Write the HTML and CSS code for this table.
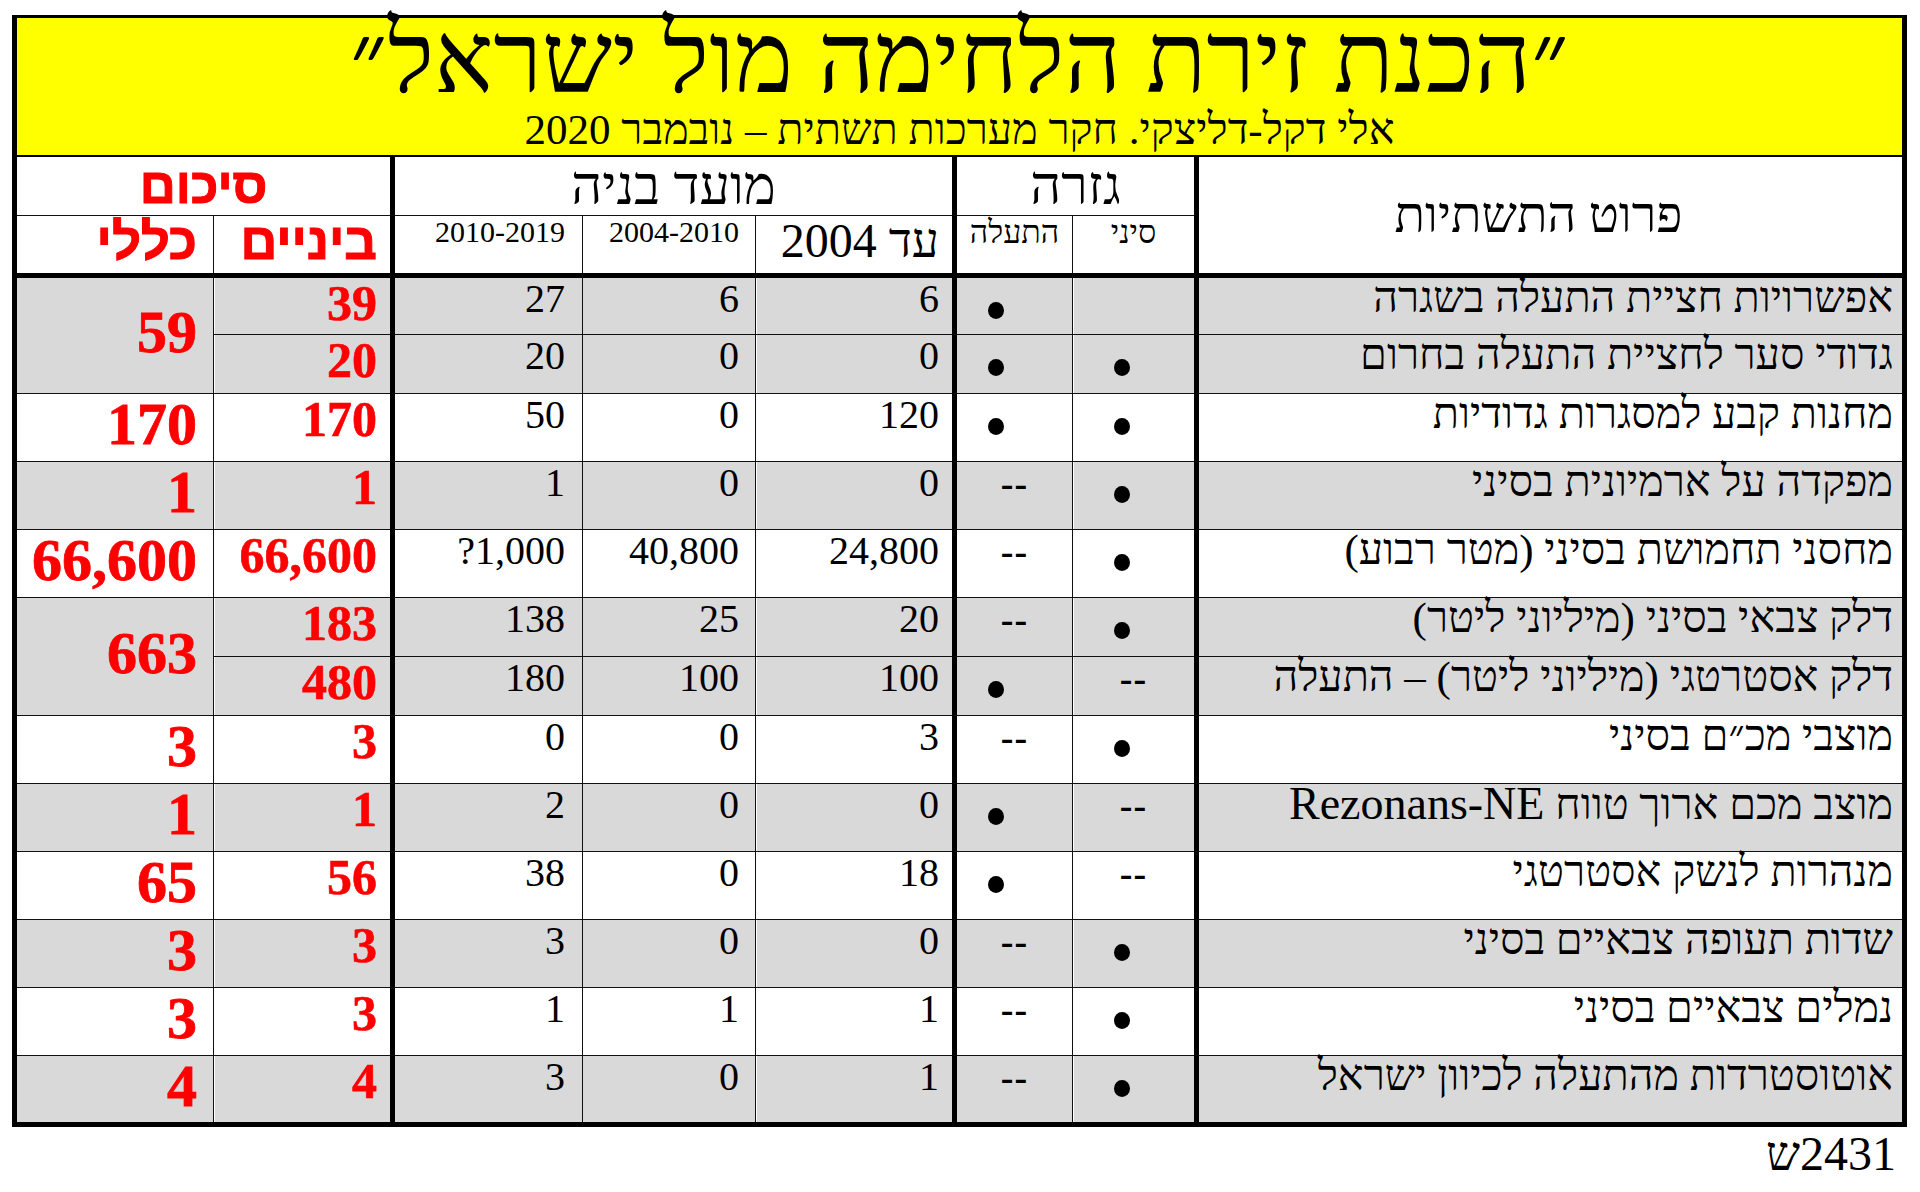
FILE: index.html
```html
<!DOCTYPE html>
<html lang="he" dir="rtl">
<head>
<meta charset="utf-8">
<title>הכנת זירת הלחימה מול ישראל</title>
<link rel="stylesheet" href="styles.css">
</head>
<body>
<div class="sheet">
  <header class="title-box">
    <h1 class="title">״הכנת זירת הלחימה מול ישראל״</h1>
    <p class="subtitle">אלי דקל-דליצקי. חקר מערכות תשתית – נובמבר 2020</p>
  </header>

  <div class="grid">
    <div class="row head1">
      <div class="cell col-d hd-desc">פרוט התשתיות</div>
      <div class="cell col-t hd-grp span2">גזרה</div>
      <div class="cell col-n3 hd-grp span3">מועד בניה</div>
      <div class="cell col-k hd-grp span2 hd-red">סיכום</div>
    </div>
    <div class="row head2">
      <div class="cell col-s sh-small">סיני</div>
      <div class="cell col-t sh-small">התעלה</div>
      <div class="cell col-n1 sh-ad">עד 2004</div>
      <div class="cell col-n2 sh-year">2004-2010</div>
      <div class="cell col-n3 sh-year">2010-2019</div>
      <div class="cell col-b sh-red">ביניים</div>
      <div class="cell col-k sh-red">כללי</div>
    </div>

    <div class="row first gray">
      <div class="cell col-d">אפשרויות חציית התעלה בשגרה</div>
      <div class="cell col-s"></div>
      <div class="cell col-t"><span class="dot"></span></div>
      <div class="cell col-n1">6</div>
      <div class="cell col-n2">6</div>
      <div class="cell col-n3">27</div>
      <div class="cell col-b">39</div>
      <div class="cell col-k merged">59</div>
    </div>
    <div class="row gray">
      <div class="cell col-d">גדודי סער לחציית התעלה בחרום</div>
      <div class="cell col-s"><span class="dot"></span></div>
      <div class="cell col-t"><span class="dot"></span></div>
      <div class="cell col-n1">0</div>
      <div class="cell col-n2">0</div>
      <div class="cell col-n3">20</div>
      <div class="cell col-b">20</div>
    </div>
    <div class="row">
      <div class="cell col-d">מחנות קבע למסגרות גדודיות</div>
      <div class="cell col-s"><span class="dot"></span></div>
      <div class="cell col-t"><span class="dot"></span></div>
      <div class="cell col-n1">120</div>
      <div class="cell col-n2">0</div>
      <div class="cell col-n3">50</div>
      <div class="cell col-b">170</div>
      <div class="cell col-k">170</div>
    </div>
    <div class="row gray">
      <div class="cell col-d">מפקדה על ארמיונית בסיני</div>
      <div class="cell col-s"><span class="dot"></span></div>
      <div class="cell col-t dash">--</div>
      <div class="cell col-n1">0</div>
      <div class="cell col-n2">0</div>
      <div class="cell col-n3">1</div>
      <div class="cell col-b">1</div>
      <div class="cell col-k">1</div>
    </div>
    <div class="row">
      <div class="cell col-d">מחסני תחמושת בסיני (מטר רבוע)</div>
      <div class="cell col-s"><span class="dot"></span></div>
      <div class="cell col-t dash">--</div>
      <div class="cell col-n1">24,800</div>
      <div class="cell col-n2">40,800</div>
      <div class="cell col-n3">1,000?</div>
      <div class="cell col-b">66,600</div>
      <div class="cell col-k">66,600</div>
    </div>
    <div class="row gray">
      <div class="cell col-d">דלק צבאי בסיני (מיליוני ליטר)</div>
      <div class="cell col-s"><span class="dot"></span></div>
      <div class="cell col-t dash">--</div>
      <div class="cell col-n1">20</div>
      <div class="cell col-n2">25</div>
      <div class="cell col-n3">138</div>
      <div class="cell col-b">183</div>
      <div class="cell col-k merged">663</div>
    </div>
    <div class="row gray">
      <div class="cell col-d">דלק אסטרטגי (מיליוני ליטר) – התעלה</div>
      <div class="cell col-s dash">--</div>
      <div class="cell col-t"><span class="dot"></span></div>
      <div class="cell col-n1">100</div>
      <div class="cell col-n2">100</div>
      <div class="cell col-n3">180</div>
      <div class="cell col-b">480</div>
    </div>
    <div class="row">
      <div class="cell col-d">מוצבי מכ״ם בסיני</div>
      <div class="cell col-s"><span class="dot"></span></div>
      <div class="cell col-t dash">--</div>
      <div class="cell col-n1">3</div>
      <div class="cell col-n2">0</div>
      <div class="cell col-n3">0</div>
      <div class="cell col-b">3</div>
      <div class="cell col-k">3</div>
    </div>
    <div class="row gray">
      <div class="cell col-d">מוצב מכם ארוך טווח <span class="latin">Rezonans-NE</span></div>
      <div class="cell col-s dash">--</div>
      <div class="cell col-t"><span class="dot"></span></div>
      <div class="cell col-n1">0</div>
      <div class="cell col-n2">0</div>
      <div class="cell col-n3">2</div>
      <div class="cell col-b">1</div>
      <div class="cell col-k">1</div>
    </div>
    <div class="row">
      <div class="cell col-d">מנהרות לנשק אסטרטגי</div>
      <div class="cell col-s dash">--</div>
      <div class="cell col-t"><span class="dot"></span></div>
      <div class="cell col-n1">18</div>
      <div class="cell col-n2">0</div>
      <div class="cell col-n3">38</div>
      <div class="cell col-b">56</div>
      <div class="cell col-k">65</div>
    </div>
    <div class="row gray">
      <div class="cell col-d">שדות תעופה צבאיים בסיני</div>
      <div class="cell col-s"><span class="dot"></span></div>
      <div class="cell col-t dash">--</div>
      <div class="cell col-n1">0</div>
      <div class="cell col-n2">0</div>
      <div class="cell col-n3">3</div>
      <div class="cell col-b">3</div>
      <div class="cell col-k">3</div>
    </div>
    <div class="row">
      <div class="cell col-d">נמלים צבאיים בסיני</div>
      <div class="cell col-s"><span class="dot"></span></div>
      <div class="cell col-t dash">--</div>
      <div class="cell col-n1">1</div>
      <div class="cell col-n2">1</div>
      <div class="cell col-n3">1</div>
      <div class="cell col-b">3</div>
      <div class="cell col-k">3</div>
    </div>
    <div class="row gray">
      <div class="cell col-d">אוטוסטרדות מהתעלה לכיוון ישראל</div>
      <div class="cell col-s"><span class="dot"></span></div>
      <div class="cell col-t dash">--</div>
      <div class="cell col-n1">1</div>
      <div class="cell col-n2">0</div>
      <div class="cell col-n3">3</div>
      <div class="cell col-b">4</div>
      <div class="cell col-k">4</div>
    </div>
  </div>

  <div class="footer">2431ש</div>
</div>
</body>
</html>
```

FILE: styles.css
```css
html, body {
  margin: 0;
  padding: 0;
  background: #ffffff;
}

body {
  font-family: "Liberation Serif", "DejaVu Sans", serif;
  color: #000000;
}

.sheet {
  width: 1895px;
  margin: 15px 13px 0 12px;
  direction: rtl;
}

/* ---------- title ---------- */
.title-box {
  box-sizing: border-box;
  height: 142px;
  background: #ffff00;
  border-style: solid;
  border-color: #000000;
  border-width: 3px 5px 2px 5px;
  text-align: center;
}

.title {
  margin: -4px 0 0 0;
  font-size: 99px;
  line-height: 90px;
  font-weight: normal;
}

.subtitle {
  margin: 7px 0 0 0;
  font-size: 43px;
  line-height: 38px;
}

/* ---------- grid table ---------- */
.grid {
  display: grid;
  grid-template-columns: 708px 122px 120px 197px 173px 192px 177px 196px;
  grid-template-rows: 58px 58px 61px 59px 68px 68px 68px 59px 59px 68px 68px 68px 68px 68px 67px;
  border-style: solid;
  border-color: #000000;
  border-width: 0 5px 5px 5px;
}

.row {
  display: contents;
}

.cell {
  box-sizing: border-box;
  min-width: 0;
  font-size: 40px;
  line-height: 42px;
  text-align: right;
  white-space: nowrap;
  border-top: 1px solid #111111;
  border-left: 1px solid #111111;
  background: #ffffff;
}

.row.gray > .cell {
  background: #d9d9d9;
}

.row.gray > .col-b,
.row.gray > .col-n1,
.row.gray > .col-s {
  box-shadow: inset 1px 0 0 #ffffff;
}

.row.first > .cell {
  border-top: 5px solid #000000;
}

.head1 > .cell {
  border-top: 0;
}

/* column borders */
.col-d,
.col-t,
.col-n3 {
  border-left: 5px solid #000000;
}

.col-k {
  border-left: 0;
}

/* column paddings */
.col-d {
  padding-right: 9px;
  font-size: 43px;
  line-height: 40px;
}

.latin {
  font-size: 46px;
}

.col-n1 { padding-right: 13px; }
.col-n2 { padding-right: 16px; }
.col-n3 { padding-right: 17px; }

.col-b {
  padding-right: 13px;
  color: #ff0000;
  font-weight: bold;
  font-size: 50px;
  line-height: 50px;
  -webkit-text-stroke: 0.6px #ff0000;
}

.col-k {
  padding-right: 16px;
  color: #ff0000;
  font-weight: bold;
  font-size: 60px;
  line-height: 60px;
  -webkit-text-stroke: 0.8px #ff0000;
}

.col-k.merged {
  grid-row: span 2;
  display: flex;
  align-items: center;
  padding-bottom: 8px;
}

/* indicator columns */
.col-s,
.col-t {
  display: flex;
  justify-content: center;
  align-items: flex-start;
}

.dot {
  display: block;
  width: 16px;
  height: 17px;
  margin-top: 24px;
  border-radius: 50%;
  background: #000000;
}

.col-t .dot {
  margin-right: 37px;
}

.col-s .dot {
  margin-right: 23px;
}

.dash {
  font-size: 38px;
  font-weight: bold;
  letter-spacing: 1px;
}

/* ---------- header ---------- */
.span2 { grid-column: span 2; }
.span3 { grid-column: span 3; }

.hd-desc {
  grid-row: span 2;
  display: flex;
  align-items: center;
  justify-content: center;
  font-size: 50px;
  line-height: 1;
  padding: 0 24px 0 0;
}

.hd-grp {
  display: flex;
  align-items: center;
  justify-content: center;
  font-size: 54px;
  line-height: 1;
  padding: 0;
  font-weight: normal;
  color: #000000;
  -webkit-text-stroke: 0;
}

.hd-red {
  color: #ff0000;
  font-family: "Liberation Sans", "DejaVu Sans", sans-serif;
  font-weight: bold;
  font-size: 50px;
  -webkit-text-stroke: 1px #ff0000;
}

.sh-small {
  font-size: 32px;
  line-height: 30px;
  padding-top: 1px;
}

.sh-ad {
  font-size: 48px;
  line-height: 48px;
  padding-top: 1px;
}

.sh-year {
  font-size: 30px;
  line-height: 30px;
  padding-top: 1px;
}

.sh-red {
  color: #ff0000;
  font-family: "Liberation Sans", "DejaVu Sans", sans-serif;
  font-weight: bold;
  font-size: 51px;
  line-height: 51px;
  padding-top: 0;
  -webkit-text-stroke: 1px #ff0000;
}

/* ---------- footer ---------- */
.footer {
  margin-top: 3px;
  padding-right: 11px;
  text-align: right;
  font-size: 48px;
  line-height: 48px;
}
```
